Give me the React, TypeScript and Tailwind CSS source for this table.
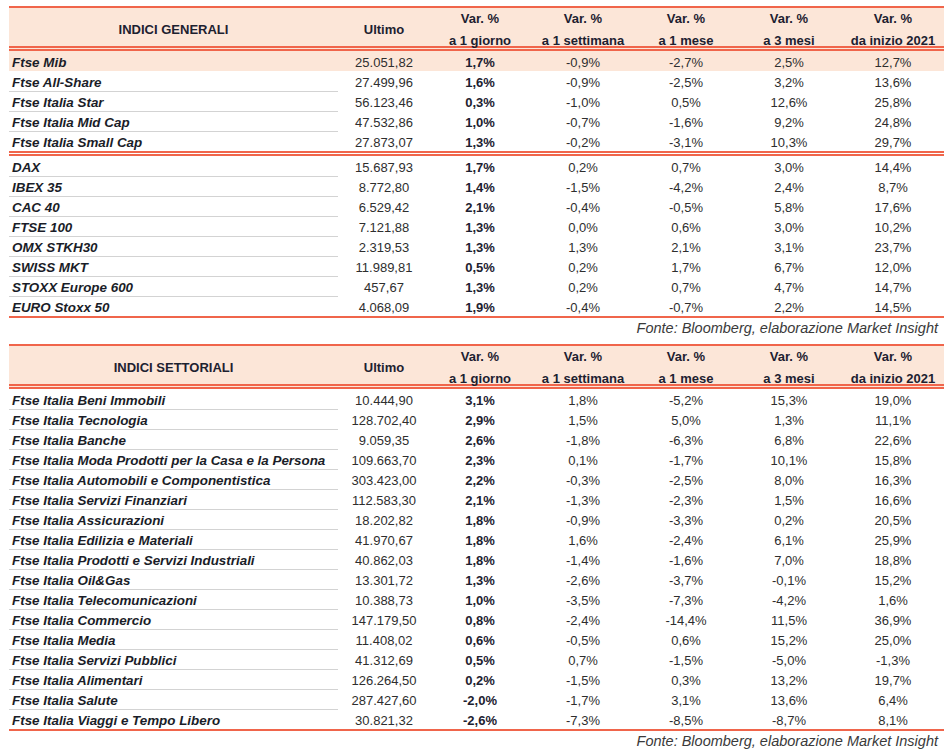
import React from "react";

type Row = [string, string, string, string, string, string, string];

const generali: Row[][] = [
    [
        ["Ftse Mib", "25.051,82", "1,7%", "-0,9%", "-2,7%", "2,5%", "12,7%"],
        ["Ftse All-Share", "27.499,96", "1,6%", "-0,9%", "-2,5%", "3,2%", "13,6%"],
        ["Ftse Italia Star", "56.123,46", "0,3%", "-1,0%", "0,5%", "12,6%", "25,8%"],
        ["Ftse Italia Mid Cap", "47.532,86", "1,0%", "-0,7%", "-1,6%", "9,2%", "24,8%"],
        ["Ftse Italia Small Cap", "27.873,07", "1,3%", "-0,2%", "-3,1%", "10,3%", "29,7%"],
    ],
    [
        ["DAX", "15.687,93", "1,7%", "0,2%", "0,7%", "3,0%", "14,4%"],
        ["IBEX 35", "8.772,80", "1,4%", "-1,5%", "-4,2%", "2,4%", "8,7%"],
        ["CAC 40", "6.529,42", "2,1%", "-0,4%", "-0,5%", "5,8%", "17,6%"],
        ["FTSE 100", "7.121,88", "1,3%", "0,0%", "0,6%", "3,0%", "10,2%"],
        ["OMX STKH30", "2.319,53", "1,3%", "1,3%", "2,1%", "3,1%", "23,7%"],
        ["SWISS MKT", "11.989,81", "0,5%", "0,2%", "1,7%", "6,7%", "12,0%"],
        ["STOXX Europe 600", "457,67", "1,3%", "0,2%", "0,7%", "4,7%", "14,7%"],
        ["EURO Stoxx 50", "4.068,09", "1,9%", "-0,4%", "-0,7%", "2,2%", "14,5%"],
    ],
];

const settoriali: Row[][] = [
    [
        ["Ftse Italia Beni Immobili", "10.444,90", "3,1%", "1,8%", "-5,2%", "15,3%", "19,0%"],
        ["Ftse Italia Tecnologia", "128.702,40", "2,9%", "1,5%", "5,0%", "1,3%", "11,1%"],
        ["Ftse Italia Banche", "9.059,35", "2,6%", "-1,8%", "-6,3%", "6,8%", "22,6%"],
        ["Ftse Italia Moda Prodotti per la Casa e la Persona", "109.663,70", "2,3%", "0,1%", "-1,7%", "10,1%", "15,8%"],
        ["Ftse Italia Automobili e Componentistica", "303.423,00", "2,2%", "-0,3%", "-2,5%", "8,0%", "16,3%"],
        ["Ftse Italia Servizi Finanziari", "112.583,30", "2,1%", "-1,3%", "-2,3%", "1,5%", "16,6%"],
        ["Ftse Italia Assicurazioni", "18.202,82", "1,8%", "-0,9%", "-3,3%", "0,2%", "20,5%"],
        ["Ftse Italia Edilizia e Materiali", "41.970,67", "1,8%", "1,6%", "-2,4%", "6,1%", "25,9%"],
        ["Ftse Italia Prodotti e Servizi Industriali", "40.862,03", "1,8%", "-1,4%", "-1,6%", "7,0%", "18,8%"],
        ["Ftse Italia Oil&Gas", "13.301,72", "1,3%", "-2,6%", "-3,7%", "-0,1%", "15,2%"],
        ["Ftse Italia Telecomunicazioni", "10.388,73", "1,0%", "-3,5%", "-7,3%", "-4,2%", "1,6%"],
        ["Ftse Italia Commercio", "147.179,50", "0,8%", "-2,4%", "-14,4%", "11,5%", "36,9%"],
        ["Ftse Italia Media", "11.408,02", "0,6%", "-0,5%", "0,6%", "15,2%", "25,0%"],
        ["Ftse Italia Servizi Pubblici", "41.312,69", "0,5%", "0,7%", "-1,5%", "-5,0%", "-1,3%"],
        ["Ftse Italia Alimentari", "126.264,50", "0,2%", "-1,5%", "0,3%", "13,2%", "19,7%"],
        ["Ftse Italia Salute", "287.427,60", "-2,0%", "-1,7%", "3,1%", "13,6%", "6,4%"],
        ["Ftse Italia Viaggi e Tempo Libero", "30.821,32", "-2,6%", "-7,3%", "-8,5%", "-8,7%", "8,1%"],
    ],
];

const cols = "grid grid-cols-[329px_92px_100px_106px_100px_106px_102px]";

function Header({ title }: { title: string }) {
    const vars = ["a 1 giorno", "a 1 settimana", "a 1 mese", "a 3 mesi", "da inizio 2021"];
    return (
        <div className={`${cols} h-[45px] bg-[#fce6d8] border-t-2 border-b-[5px] border-double border-t-[#f0654b] border-b-[#f0654b] font-bold text-[13px] leading-[22px] text-[#1d2130]`}>
            <div className="flex items-center justify-center">{title}</div>
            <div className="flex items-center justify-center">Ultimo</div>
            {vars.map((v) => (
                <div key={v} className="flex flex-col items-center justify-center">
                    <span>Var. %</span>
                    <span>{v}</span>
                </div>
            ))}
        </div>
    );
}

function Table({ title, groups }: { title: string; groups: Row[][] }) {
    return (
        <div>
            <Header title={title} />
            {groups.map((rows, gi) => (
                <div
                    key={gi}
                    className={
                        gi < groups.length - 1
                            ? "border-b-[5px] border-double border-[#f0654b]"
                            : "border-b-2 border-[#f0654b]"
                    }
                >
                    {rows.map((r, i) => {
                        const last = i === rows.length - 1;
                        const highlight = title === "INDICI GENERALI" && gi === 0 && i === 0;
                        return (
                            <div
                                key={r[0]}
                                className={`${cols} h-[20px] text-[13px] leading-[17px] ${highlight ? "bg-[#fce6d8]" : ""}`}
                            >
                                <div
                                    className={`pl-[3px] pt-[3px] text-[13.4px] font-bold italic text-[#1a1d28] whitespace-nowrap ${
                                        last || highlight ? "" : "border-b border-[#d3d3d3]"
                                    }`}
                                >
                                    {r[0]}
                                </div>
                                {r.slice(1).map((v, j) => (
                                    <div
                                        key={j}
                                        className={`pt-[3px] text-center ${j === 1 ? "font-bold text-[#1d2130]" : "text-[#2e2e2e]"}`}
                                    >
                                        {v}
                                    </div>
                                ))}
                            </div>
                        );
                    })}
                </div>
            ))}
            <div className="h-[26px] pt-[1px] pr-[6px] text-right italic text-[14.5px] leading-[18px] text-[#3a3a3a]">
                Fonte: Bloomberg, elaborazione Market Insight
            </div>
        </div>
    );
}

export default function App() {
    return (
        <main className="w-[947px] h-[752px] bg-white pt-[6px] pl-[9px] font-['Liberation_Sans',Arial,sans-serif] overflow-hidden">
            <div className="w-[935px]">
                <Table title="INDICI GENERALI" groups={generali} />
                <Table title="INDICI SETTORIALI" groups={settoriali} />
            </div>
        </main>
    );
}
